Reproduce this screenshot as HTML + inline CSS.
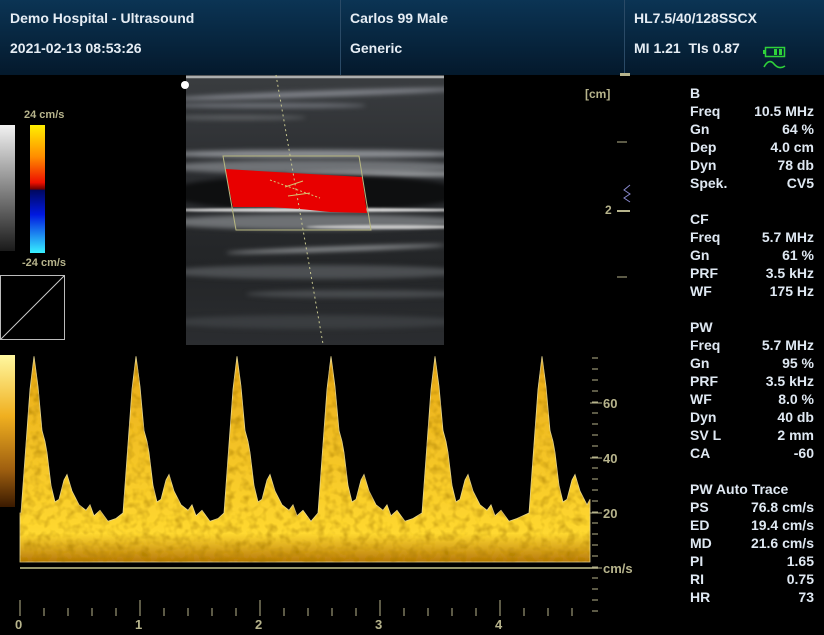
<!DOCTYPE html>
<html><head><meta charset="utf-8"><style>
*{margin:0;padding:0;box-sizing:border-box}
body{width:824px;height:635px;background:#000;position:relative;overflow:hidden;font-family:"Liberation Sans",Arial,sans-serif;font-weight:bold}
.hdr{position:absolute;left:0;top:0;width:824px;height:75px;background:linear-gradient(#0b3454,#04192c)}
.sep{position:absolute;top:0;width:1px;height:75px;background:#2a4a66}
.ht{position:absolute;color:#e6edf4;font-size:14px;white-space:nowrap}
.t{position:absolute;color:#dfe8f2;font-size:14px;white-space:nowrap;line-height:18px}
.r{position:absolute;color:#dfe8f2;font-size:14px;white-space:nowrap;line-height:18px;right:10px;text-align:right}
.ol{position:absolute;color:#b7b48c;font-size:12px;white-space:nowrap}
.bm{position:absolute;left:186px;top:75px;width:258px;height:270px;overflow:hidden;background:linear-gradient(#3a3d40,#2a2c2f 40%,#232527 70%,#2b2d30)}
.band{position:absolute;filter:blur(2.5px);border-radius:50%}
</style></head><body>
<div class="hdr"></div>
<div class="sep" style="left:340px"></div>
<div class="sep" style="left:624px"></div>
<div class="ht" style="left:10px;top:10px">Demo Hospital - Ultrasound</div>
<div class="ht" style="left:10px;top:40px">2021-02-13 08:53:26</div>
<div class="ht" style="left:350px;top:10px">Carlos 99 Male</div>
<div class="ht" style="left:350px;top:40px">Generic</div>
<div class="ht" style="left:634px;top:10px">HL7.5/40/128SSCX</div>
<div class="ht" style="left:634px;top:40px">MI 1.21 &nbsp;TIs 0.87</div>
<svg style="position:absolute;left:762px;top:45px" width="28" height="28">
<rect x="3.5" y="2.5" width="19" height="9" fill="none" stroke="#2fd23a" stroke-width="1.5"/>
<rect x="1" y="5" width="2" height="4" fill="#2fd23a"/>
<rect x="12" y="4" width="3" height="6" fill="#2fd23a"/><rect x="17" y="4" width="3" height="6" fill="#2fd23a"/>
<path d="M2 22 Q7 13 12 19 T23 21" fill="none" stroke="#2fd23a" stroke-width="1.6"/>
</svg>
<div style="position:absolute;left:620px;top:73px;width:10px;height:3px;background:#b7b48c"></div>

<!-- B mode -->
<div class="bm">
<div class="band" style="left:-20px;top:1px;width:300px;height:2px;background:#ccc;filter:blur(0.5px);border-radius:0"></div>
<div class="band" style="left:-20px;top:16px;width:300px;height:6px;background:#80838a;transform:rotate(-2deg)"></div>
<div class="band" style="left:-20px;top:28px;width:200px;height:5px;background:#70737a"></div>
<div class="band" style="left:-20px;top:40px;width:140px;height:5px;background:#5a5d60"></div>
<div class="band" style="left:-20px;top:75px;width:300px;height:8px;background:#8d9095"></div>
<div class="band" style="left:-20px;top:85px;width:300px;height:14px;background:#6f7276"></div>
<div class="band" style="left:100px;top:96px;width:200px;height:6px;background:#9a9da0"></div>
<div class="band" style="left:-20px;top:100px;width:300px;height:36px;background:#0e0f10"></div>
<div class="band" style="left:-20px;top:133px;width:300px;height:4px;background:#e0e0e0;filter:blur(1px)"></div>
<div class="band" style="left:-20px;top:139px;width:300px;height:16px;background:#6e7174"></div>
<div class="band" style="left:120px;top:150px;width:160px;height:4px;background:#c8c8c8;filter:blur(1px)"></div>
<div class="band" style="left:40px;top:172px;width:220px;height:4px;background:#9a9da0;transform:rotate(-2deg)"></div>
<div class="band" style="left:-20px;top:190px;width:300px;height:14px;background:#4c4f52"></div>
<div class="band" style="left:60px;top:215px;width:220px;height:8px;background:#484b4e"></div>
<div class="band" style="left:-20px;top:240px;width:300px;height:14px;background:#3a3d40"></div>
</div>
<svg style="position:absolute;left:0;top:0" width="824" height="635">
<circle cx="185" cy="85" r="4" fill="#fff"/>
<path d="M225,169 L362,177 L367,213 L330,212 L300,209 L270,207 L233,207 Z" fill="#e80000"/>
<polygon points="223,156 359,156 371,230 236,230" fill="none" stroke="#b8b880" stroke-width="1"/>
<line x1="276" y1="75" x2="323" y2="344" stroke="#c8c890" stroke-width="1" stroke-dasharray="2,3"/>
<line x1="270" y1="180" x2="320" y2="198" stroke="#d8c070" stroke-dasharray="2,2"/>
<line x1="285" y1="187" x2="303" y2="181" stroke="#d8c070"/><line x1="288" y1="196" x2="310" y2="193" stroke="#d8c070"/>
<line x1="617" y1="142" x2="627" y2="142" stroke="#b7b48c"/>
<line x1="617" y1="211" x2="630" y2="211" stroke="#b7b48c" stroke-width="2"/>
<line x1="617" y1="277" x2="627" y2="277" stroke="#b7b48c"/>
<path d="M630 185 L624 190 L630 194 L624 198 L630 202" fill="none" stroke="#8888cc"/>
<rect x="0.5" y="275.5" width="64" height="64" fill="none" stroke="#bbb"/>
<line x1="1" y1="339" x2="64" y2="276" stroke="#ccc"/>
</svg>
<div class="ol" style="left:585px;top:87px">[cm]</div>
<div class="ol" style="left:605px;top:203px">2</div>
<div style="position:absolute;left:0;top:125px;width:15px;height:126px;background:linear-gradient(#f2f2f2,#1a1a1a)"></div>
<div style="position:absolute;left:30px;top:125px;width:15px;height:128px;background:linear-gradient(#ffef00,#ff8c00 25%,#ee1000 45%,#700000 50%,#000860 51%,#0018e0 70%,#38f0ff)"></div>
<div class="ol" style="left:24px;top:109px;font-size:11px">24 cm/s</div>
<div class="ol" style="left:22px;top:257px;font-size:11px">-24 cm/s</div>

<div class="t" style="left:690px;top:84px">B<br>Freq<br>Gn<br>Dep<br>Dyn<br>Spek.</div>
<div class="r" style="top:84px"><br>10.5 MHz<br>64 %<br>4.0 cm<br>78 db<br>CV5</div>
<div class="t" style="left:690px;top:210px">CF<br>Freq<br>Gn<br>PRF<br>WF</div>
<div class="r" style="top:210px"><br>5.7 MHz<br>61 %<br>3.5 kHz<br>175 Hz</div>
<div class="t" style="left:690px;top:318px">PW<br>Freq<br>Gn<br>PRF<br>WF<br>Dyn<br>SV L<br>CA</div>
<div class="r" style="top:318px"><br>5.7 MHz<br>95 %<br>3.5 kHz<br>8.0 %<br>40 db<br>2 mm<br>-60</div>
<div class="t" style="left:690px;top:480px">PW Auto Trace<br>PS<br>ED<br>MD<br>PI<br>RI<br>HR</div>
<div class="r" style="top:480px"><br>76.8 cm/s<br>19.4 cm/s<br>21.6 cm/s<br>1.65<br>0.75<br>73</div>

<div style="position:absolute;left:0;top:355px;width:15px;height:152px;background:linear-gradient(#fff8a0,#f0b020 40%,#a06010 75%,#3a1a00)"></div>
<svg id="dop" style="position:absolute;left:0;top:0" width="824" height="635">
<defs><linearGradient id="g" x1="0" y1="355" x2="0" y2="565" gradientUnits="userSpaceOnUse">
<stop offset="0" stop-color="#e8a818"/><stop offset="0.4" stop-color="#f2c025"/><stop offset="0.85" stop-color="#ffd830"/><stop offset="1" stop-color="#b07008"/></linearGradient>
<filter id="n"><feTurbulence type="fractalNoise" baseFrequency="0.12" numOctaves="2" result="t"/><feColorMatrix in="t" type="matrix" values="0 0 0 0 0.4 0 0 0 0 0.2 0 0 0 0 0 0 0 0 -1.5 0.85" result="m"/><feComposite in="m" in2="SourceGraphic" operator="in" result="d"/><feMerge><feMergeNode in="SourceGraphic"/><feMergeNode in="d"/></feMerge></filter></defs>
<path id="wf" fill="url(#g)" stroke="#e8d890" stroke-width="0.8" filter="url(#n)"/>
<line x1="20" y1="568" x2="598" y2="568" stroke="#c8c890" stroke-width="1.5"/>
<g id="ticks" stroke="#b7b48c"></g>
</svg>
<div class="ol" style="left:603px;top:396px;font-size:13px">60</div>
<div class="ol" style="left:603px;top:451px;font-size:13px">40</div>
<div class="ol" style="left:603px;top:506px;font-size:13px">20</div>
<div class="ol" style="left:603px;top:561px;font-size:13px">cm/s</div>
<div class="ol" style="left:15px;top:617px;font-size:13px">0</div>
<div class="ol" style="left:135px;top:617px;font-size:13px">1</div>
<div class="ol" style="left:255px;top:617px;font-size:13px">2</div>
<div class="ol" style="left:375px;top:617px;font-size:13px">3</div>
<div class="ol" style="left:495px;top:617px;font-size:13px">4</div>
<script>
var P=[34,136,237,331,435,542],pts=[[20,20]];
function y(v){return 568-v*2.75;}
var seg=[[-13,20],[-9,40],[-4,65],[0,77],[4,66],[8,50],[11,46],[13,42],[17,30],[21,24],[25,25],[30,32],[33,34],[38,28],[45,23],[52,21],[56,23],[60,19],[66,21],[74,17],[82,18]];
P.forEach(function(p,i){
 seg.forEach(function(s){var x=p+s[0];if(x>=20&&x<=590&&(i==P.length-1||x<P[i+1]-13))pts.push([x,s[1]]);});
});
pts.push([590,25]);
var d="M20 562";pts.forEach(function(q){d+=" L"+q[0]+" "+y(q[1]).toFixed(1);});d+=" L590 562 Z";
document.getElementById("wf").setAttribute("d",d);
var t="";
for(var yy=358;yy<620;yy+=11)t+='<line x1="592" y1="'+yy+'" x2="598" y2="'+yy+'"/>';
[403,458,513,568].forEach(function(v){t+='<line x1="590" y1="'+v+'" x2="602" y2="'+v+'"/>';});
for(var x=20;x<590;x+=24){var big=((x-20)%120==0);t+='<line x1="'+x+'" y1="'+(big?600:608)+'" x2="'+x+'" y2="616"/>';}
document.getElementById("ticks").innerHTML=t;
</script>
</body></html>
